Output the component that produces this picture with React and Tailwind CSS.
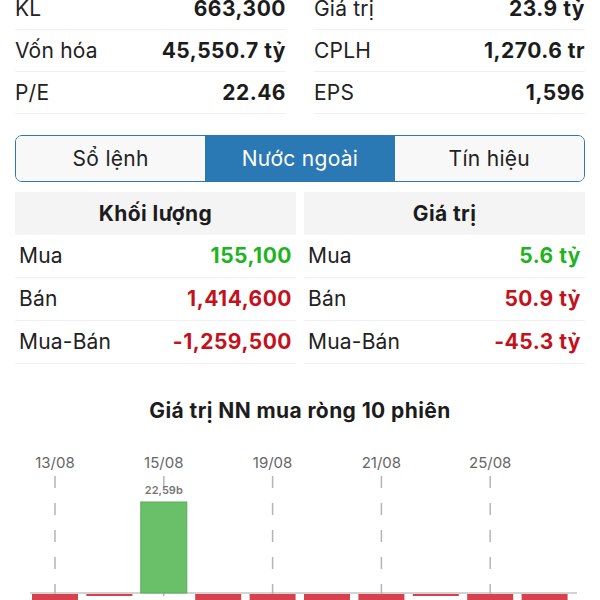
const FONT = "font-['Inter','Noto_Sans',sans-serif]";

const stats = [
  ["KL", "663,300", "Giá trị", "23.9 tỷ"],
  ["Vốn hóa", "45,550.7 tỷ", "CPLH", "1,270.6 tr"],
  ["P/E", "22.46", "EPS", "1,596"],
];

const GREEN = "text-[#1fb41f]";
const RED = "text-[#c4111c]";

const volume = [
  ["Mua", "155,100", GREEN],
  ["Bán", "1,414,600", RED],
  ["Mua-Bán", "-1,259,500", RED],
];
const value = [
  ["Mua", "5.6 tỷ", GREEN],
  ["Bán", "50.9 tỷ", RED],
  ["Mua-Bán", "-45.3 tỷ", RED],
];

// net buy per session; positive = green bar
const bars = [-1, -0.1, 22.59, -1, -1, -1, -1, -0.1, -1, -1];
const dates = { 0: "13/08", 2: "15/08", 4: "19/08", 6: "21/08", 8: "25/08" };

function StatCol({ rows }) {
  return (
    <div>
      {rows.map(([label, val]) => (
        <div key={label} className="h-[42px] flex items-center justify-between border-b border-[#f0f0f0]">
          <span className="text-[#222] tracking-[0.2px]">{label}</span>
          <span className="font-bold text-[#1c1c1c] tracking-[0.5px]">{val}</span>
        </div>
      ))}
    </div>
  );
}

function FlowTable({ title, rows }) {
  return (
    <div>
      <div className="h-[43px] bg-[#f4f4f4] flex items-center justify-center font-bold text-[#1c1c1c] tracking-[0.4px]">
        {title}
      </div>
      {rows.map(([label, val, color]) => (
        <div key={label} className="h-[43px] px-[4px] flex items-center justify-between border-b border-[#f0f0f0]">
          <span className="text-[#222] tracking-[0.2px]">{label}</span>
          <span className={`font-bold tracking-[0.5px] ${color}`}>{val}</span>
        </div>
      ))}
    </div>
  );
}

function Chart() {
  const base = 170;
  const step = 54.4;
  const w = 46;
  const scale = 91 / 22.59;
  return (
    <svg width="600" height="190" className="block">
      <line x1="30" y1={base} x2="577" y2={base} stroke="#c4c4c4" strokeWidth="1.5" />
      {bars.map((v, i) => {
        const cx = 32 + i * step + w / 2;
        return dates[i] ? (
          <g key={"d" + i}>
            <text x={cx} y="45" textAnchor="middle" fontSize="15" fill="#666">
              {dates[i]}
            </text>
            <line x1={cx} y1="53" x2={cx} y2="190" stroke="#b5b5b5" strokeWidth="1.5" strokeDasharray="12 15" />
          </g>
        ) : null;
      })}
      {bars.map((v, i) => {
        const x = 32 + i * step;
        if (v > 0) {
          const h = v * scale;
          return (
            <g key={i}>
              <rect x={x} y={base - h} width={w} height={h} fill="#6abf69" stroke="#5aaa5a" strokeWidth="1" />
              <text x={x + w / 2} y={base - h - 8} textAnchor="middle" fontSize="11" fontWeight="600" fill="#777">
                22,59b
              </text>
            </g>
          );
        }
        const h = v > -0.5 ? 2 : 30;
        return <rect key={i} x={x} y={base + 1} width={w} height={h} fill="#d8404e" />;
      })}
    </svg>
  );
}

export default function App() {
  return (
    <div className={`w-[600px] h-[600px] overflow-hidden bg-white text-[21px] ${FONT}`}>
      <div className="-mt-[12px] grid grid-cols-2 gap-x-[28px] px-[15px]">
        <StatCol rows={stats.map((r) => [r[0], r[1]])} />
        <StatCol rows={stats.map((r) => [r[2], r[3]])} />
      </div>

      <div className="mt-[21px] mx-[15px] h-[47px] flex border border-[#2a78b4] rounded-[7px] overflow-hidden tracking-[0.3px]">
        <div className="flex-1 flex items-center justify-center bg-[#f8f8f8] text-[#222]">Sổ lệnh</div>
        <div className="flex-1 flex items-center justify-center bg-[#2a78b4] text-white">Nước ngoài</div>
        <div className="flex-1 flex items-center justify-center bg-[#f8f8f8] text-[#222]">Tín hiệu</div>
      </div>

      <div className="mt-[10px] grid grid-cols-2 gap-x-[8px] px-[15px]">
        <FlowTable title="Khối lượng" rows={volume} />
        <FlowTable title="Giá trị" rows={value} />
      </div>

      <div className="mt-[34px] text-center text-[21px] leading-[25px] font-bold text-[#1c1c1c] tracking-[0.4px]">
        Giá trị NN mua ròng 10 phiên
      </div>
      <Chart />
    </div>
  );
}
